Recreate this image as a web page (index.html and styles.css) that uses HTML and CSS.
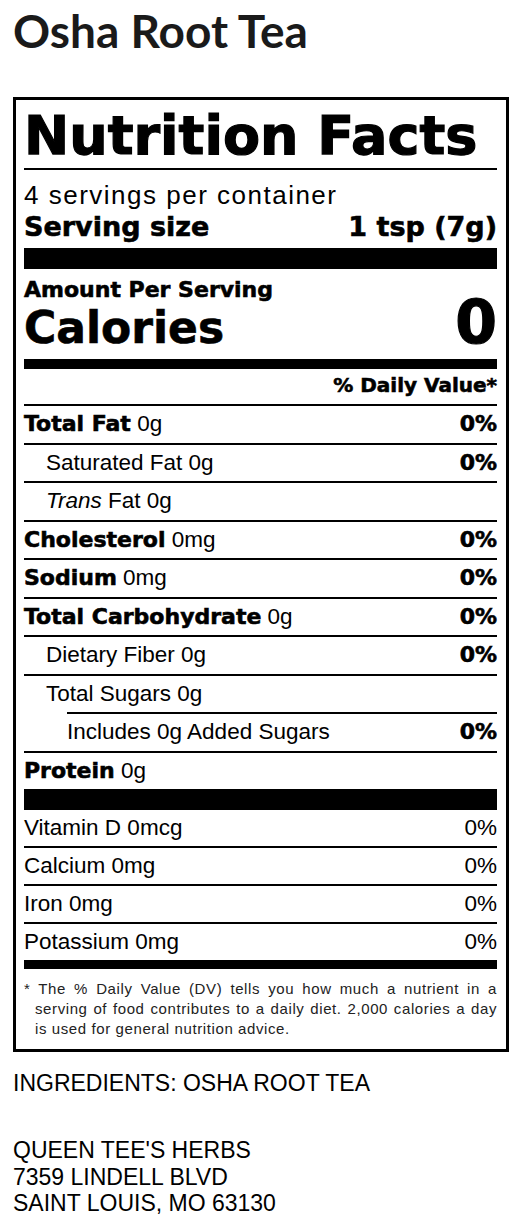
FILE: index.html
```html
<!DOCTYPE html>
<html lang="en">
<head>
  <meta charset="UTF-8">
  <meta name="viewport" content="width=device-width, initial-scale=1.0">
  <title>Osha Root Tea</title>
  <link rel="stylesheet" href="styles.css">
</head>
<body>
  <h1 class="product-name">Osha Root Tea</h1>

  <section class="facts">
    <h2 class="facts-title">Nutrition Facts</h2>

    <div class="servings">
      <p class="servings-count">4 servings per container</p>
      <p class="serving-size"><span>Serving size</span><span>1 tsp (7g)</span></p>
    </div>

    <div class="calories">
      <p class="amount">Amount Per Serving</p>
      <p class="calories-row"><span>Calories</span><span class="calories-value">0</span></p>
    </div>

    <p class="dv-head">% Daily Value*</p>

    <ul class="nutrients">
      <li class="row"><span><b>Total Fat</b> 0g</span><b>0%</b></li>
      <li class="row sub"><span>Saturated Fat 0g</span><b>0%</b></li>
      <li class="row sub"><span><i>Trans</i> Fat 0g</span></li>
      <li class="row"><span><b>Cholesterol</b> 0mg</span><b>0%</b></li>
      <li class="row"><span><b>Sodium</b> 0mg</span><b>0%</b></li>
      <li class="row"><span><b>Total Carbohydrate</b> 0g</span><b>0%</b></li>
      <li class="row sub"><span>Dietary Fiber 0g</span><b>0%</b></li>
      <li class="row sub"><span>Total Sugars 0g</span></li>
      <li class="row added"><span>Includes 0g Added Sugars</span><b>0%</b></li>
      <li class="row"><span><b>Protein</b> 0g</span></li>
    </ul>

    <ul class="vitamins">
      <li class="row"><span>Vitamin D 0mcg</span><span>0%</span></li>
      <li class="row"><span>Calcium 0mg</span><span>0%</span></li>
      <li class="row"><span>Iron 0mg</span><span>0%</span></li>
      <li class="row"><span>Potassium 0mg</span><span>0%</span></li>
    </ul>

    <p class="footnote">* The % Daily Value (DV) tells you how much a nutrient in a serving of food contributes to a daily diet. 2,000 calories a day is used for general nutrition advice.</p>
  </section>

  <p class="ingredients">INGREDIENTS: OSHA ROOT TEA</p>

  <p class="address">
    QUEEN TEE'S HERBS<br>
    7359 LINDELL BLVD<br>
    SAINT LOUIS, MO 63130
  </p>
</body>
</html>
```

FILE: styles.css
```css
:root {
  --ink: #000000;
  --heavy: 'DejaVu Sans', 'Liberation Sans', sans-serif;
  --plain: 'Liberation Sans', Arial, sans-serif;
}

* {
  box-sizing: border-box;
}

body {
  margin: 0;
  padding: 0 14px 0 13px;
  font-family: var(--plain);
  color: var(--ink);
  background: #ffffff;
}

p,
ul {
  margin: 0;
  padding: 0;
}

.product-name {
  margin: 3px 0 0;
  font-family: Lato, sans-serif;
  font-weight: 700;
  font-size: 46px;
  line-height: normal;
  color: #1a1a1a;
}

/* label box */

.facts {
  margin-top: 39px;
  border: 3px solid var(--ink);
  padding: 0 9px 0 8px;
}

.facts b,
.facts-title,
.serving-size,
.amount,
.calories-row,
.dv-head {
  font-family: var(--heavy);
  font-weight: 700;
  -webkit-text-stroke: 0.6px var(--ink);
}

.facts-title {
  margin: 0;
  padding: 9px 0 5px;
  font-size: 54px;
  line-height: 54px;
  -webkit-text-stroke: 1.2px var(--ink);
  border-bottom: 2px solid var(--ink);
}

.servings {
  padding: 11px 0 6px;
}

.servings-count {
  font-size: 26px;
  line-height: 28px;
  letter-spacing: 1.5px;
}

.serving-size {
  display: flex;
  justify-content: space-between;
  margin-top: 3px;
  font-size: 27px;
  line-height: 30px;
}

.calories {
  border-top: 21px solid var(--ink);
  padding: 9px 0 11px;
}

.amount {
  font-size: 22px;
  line-height: 24px;
}

.calories-row {
  display: flex;
  justify-content: space-between;
  align-items: baseline;
  font-size: 44px;
  line-height: 40px;
}

.calories-value {
  font-size: 60px;
  -webkit-text-stroke: 1.2px var(--ink);
}

.dv-head {
  border-top: 10px solid var(--ink);
  padding: 3px 0 6px;
  font-size: 20px;
  line-height: 26px;
  text-align: right;
}

/* nutrient rows */

.nutrients,
.vitamins {
  list-style: none;
}

.row {
  display: flex;
  justify-content: space-between;
  font-size: 22.5px;
  line-height: 36.5px;
}

.row b {
  font-size: 22px;
}

.nutrients .row {
  border-top: 2px solid var(--ink);
}

.row.sub {
  padding-left: 22px;
}

.row.added {
  margin-left: 43px;
}

.vitamins {
  border-top: 21px solid var(--ink);
}

.vitamins .row {
  line-height: 36px;
}

.vitamins .row + .row {
  border-top: 2px solid var(--ink);
}

.footnote {
  border-top: 9px solid var(--ink);
  padding: 10px 0 10px 11px;
  text-indent: -11px;
  font-size: 15px;
  line-height: 20px;
  letter-spacing: 0.6px;
  text-align: justify;
  color: #222222;
}

/* below the label */

.ingredients {
  margin-top: 18px;
  font-size: 23px;
  line-height: 26px;
}

.address {
  margin-top: 41px;
  font-size: 23px;
  line-height: 26.5px;
}
```
